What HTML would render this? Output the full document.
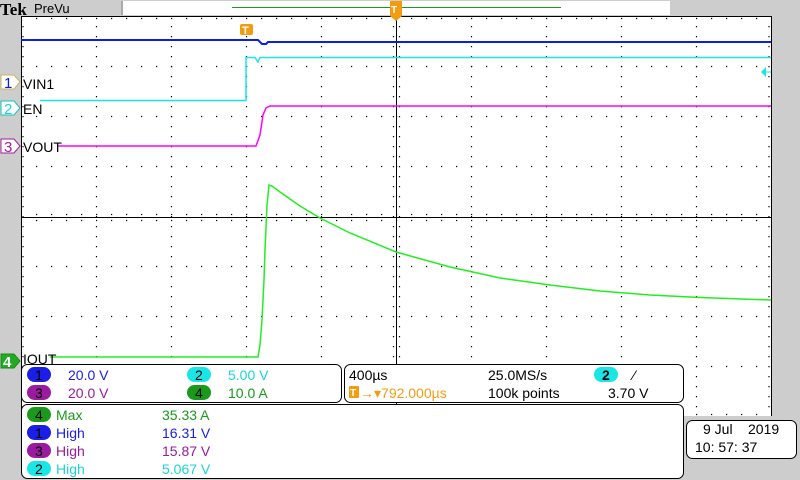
<!DOCTYPE html>
<html><head><meta charset="utf-8"><style>
body{margin:0;width:800px;height:480px;overflow:hidden;background:#cdcdcd;font-family:"Liberation Sans",sans-serif;}
svg{position:absolute;left:0;top:0}
text{font-family:"Liberation Sans",sans-serif;font-size:14px}
</style></head><body>
<svg width="800" height="480" viewBox="0 0 800 480" xmlns="http://www.w3.org/2000/svg">
<rect x="0" y="0" width="800" height="480" fill="#cdcdcd"/>
<text x="0" y="15" style="font-family:'Liberation Serif',serif;font-size:17px;font-weight:bold">Tek</text>
<text x="34" y="13" style="font-size:13px">PreVu</text>
<rect x="122" y="1" width="548" height="14" fill="#fff"/>
<line x1="232" y1="7.5" x2="561" y2="7.5" stroke="#1a9a1a" stroke-width="1"/>
<rect x="121" y="1" width="2" height="14" fill="#aaa"/>
<rect x="21" y="16" width="750" height="400" fill="#fff"/>
<line x1="21.5" y1="16" x2="21.5" y2="416" stroke="#000"/>
<line x1="771.5" y1="16" x2="771.5" y2="416" stroke="#000"/>
<line x1="21" y1="16.5" x2="772" y2="16.5" stroke="#000"/>
<g stroke="#000" stroke-width="1.2" stroke-dasharray="1.2 13.8">
<line x1="36" y1="66.5" x2="771" y2="66.5"/>
<line x1="36" y1="116.5" x2="771" y2="116.5"/>
<line x1="36" y1="166.5" x2="771" y2="166.5"/>
<line x1="36" y1="266.5" x2="771" y2="266.5"/>
<line x1="36" y1="316.5" x2="771" y2="316.5"/>
<line x1="36" y1="366.5" x2="771" y2="366.5"/>
<line x1="36" y1="18.5" x2="771" y2="18.5"/>
<line x1="36" y1="414.5" x2="771" y2="414.5"/>
</g>
<g stroke="#000" stroke-width="1.2" stroke-dasharray="1.2 8.8">
<line x1="96.5" y1="26" x2="96.5" y2="416"/>
<line x1="171.5" y1="26" x2="171.5" y2="416"/>
<line x1="246.5" y1="26" x2="246.5" y2="416"/>
<line x1="321.5" y1="26" x2="321.5" y2="416"/>
<line x1="471.5" y1="26" x2="471.5" y2="416"/>
<line x1="546.5" y1="26" x2="546.5" y2="416"/>
<line x1="621.5" y1="26" x2="621.5" y2="416"/>
<line x1="696.5" y1="26" x2="696.5" y2="416"/>
<line x1="769" y1="26" x2="769" y2="416"/>
<line x1="23" y1="26" x2="23" y2="416"/>
</g>
<g stroke="#000" stroke-width="1.2" stroke-dasharray="1.2 8.8">
<line x1="393.5" y1="26" x2="393.5" y2="416"/>
<line x1="399.5" y1="26" x2="399.5" y2="416"/>
</g>
<g stroke="#000" stroke-width="1.2" stroke-dasharray="1.2 13.8">
<line x1="36" y1="214.5" x2="771" y2="214.5"/>
<line x1="36" y1="220.5" x2="771" y2="220.5"/>
</g>
<line x1="21" y1="217.5" x2="771" y2="217.5" stroke="#000"/>
<line x1="396.5" y1="16" x2="396.5" y2="416" stroke="#000"/>
<polyline fill="none" stroke="#0a1ee6" stroke-width="2" points="21,40 258,40 262,44 266,44 268,42 771,42"/>
<polyline fill="none" stroke="#19e6e6" stroke-width="1.5" points="40,100.5 246,100.5 246,57.5 255,57.5 258,62 260,57.5 771,57.5"/>
<polyline fill="none" stroke="#ff00ff" stroke-width="1.5" points="58,146 256,146 260,135 263,115 266,108 270,106 771,106"/>
<polyline fill="none" stroke="#22ee22" stroke-width="1.5" points="50,357 258,357 260,345 262,320 264,280 265,250 267,205 269,185 272,186 280,192 300,206 320,218 350,233 396,252 450,267 500,278 550,285 600,291 650,295 700,297.5 771,300"/>
<rect x="240" y="24" width="13" height="11" rx="2" fill="#f39c12"/>
<text x="242" y="34" fill="#fff" style="font-size:11px;font-weight:bold">T</text>
<polygon points="390,1 402,1 402,16 396,21 390,16" fill="#f39c12"/>
<text x="391" y="13" fill="#fff" style="font-size:10px;font-weight:bold">T</text>
<polygon points="761,72 766,67 766,77" fill="#19e6e6"/><line x1="764" y1="72" x2="771" y2="72" stroke="#19e6e6"/>
<polygon points="1,75 14,75 20,82 14,89 1,89" fill="#fff" stroke="#c8b560"/>
<text x="4" y="88" fill="#0a1ee6" style="font-size:15px">1</text>
<polygon points="1,101 14,101 20,108 14,115 1,115" fill="#fff" stroke="#19c0c0"/>
<text x="4" y="114" fill="#19d6d6" style="font-size:15px">2</text>
<polygon points="1,139 14,139 20,146 14,153 1,153" fill="#fff" stroke="#a020a0"/>
<text x="4" y="152" fill="#a020a0" style="font-size:15px">3</text>
<polygon points="1,354 14,354 20,361 14,368 1,368" fill="#22aa22" stroke="#1a8a1a"/>
<text x="3" y="367" fill="#fff" style="font-size:15px;font-weight:bold">4</text>
<g fill="#000">
<text x="23" y="89">VIN1</text>
<text x="23" y="114">EN</text>
<text x="23" y="152">VOUT</text>
<text x="23" y="364">IOUT</text>
</g>
<rect x="21.5" y="364.5" width="320" height="38" rx="6" fill="#fff" stroke="#000"/>
<rect x="344.5" y="364.5" width="339" height="38" rx="6" fill="#fff" stroke="#000"/>
<rect x="21.5" y="404.5" width="662" height="74" rx="6" fill="#fff" stroke="#000"/>
<rect x="686.5" y="420.5" width="110" height="38" rx="6" fill="#fff" stroke="#000"/>
<g>
<rect x="27" y="367" width="24" height="15" rx="7.5" fill="#1a1ee6"/><text x="35" y="380" fill="#000">1</text>
<text x="68" y="380" fill="#1a1ee6">20.0 V</text>
<rect x="187" y="367" width="24" height="15" rx="7.5" fill="#19e6e6"/><text x="195" y="380" fill="#000">2</text>
<text x="228" y="380" fill="#19d6d6">5.00 V</text>
<rect x="27" y="385" width="24" height="15" rx="7.5" fill="#9a1aa0"/><text x="35" y="398" fill="#000">3</text>
<text x="68" y="398" fill="#9a1aa0">20.0 V</text>
<rect x="187" y="385" width="24" height="15" rx="7.5" fill="#1a9a1a"/><text x="195" y="398" fill="#000">4</text>
<text x="228" y="398" fill="#1a9a1a">10.0 A</text>
<text x="349" y="380" fill="#000">400µs</text>
<text x="488" y="380" fill="#000">25.0MS/s</text>
<rect x="594" y="367" width="24" height="15" rx="7.5" fill="#19e6e6"/><text x="602" y="380" fill="#000" style="font-weight:bold">2</text>
<text x="633" y="380" fill="#000">⁄</text>
<rect x="349" y="386" width="10" height="12" rx="1" fill="#f39c12"/><text x="350" y="396" fill="#fff" style="font-size:10px;font-weight:bold">T</text>
<text x="360" y="398" fill="#f39c12">→▾792.000µs</text>
<text x="488" y="398" fill="#000">100k points</text>
<text x="608" y="398" fill="#000">3.70 V</text>
<rect x="27" y="407" width="24" height="15" rx="7.5" fill="#1a9a1a"/><text x="35" y="420" fill="#000">4</text>
<text x="56" y="420" fill="#1a9a1a">Max</text><text x="162" y="420" fill="#1a9a1a">35.33 A</text>
<rect x="27" y="425" width="24" height="15" rx="7.5" fill="#1a1ee6"/><text x="35" y="438" fill="#000">1</text>
<text x="56" y="438" fill="#1a1ee6">High</text><text x="162" y="438" fill="#1a1ee6">16.31 V</text>
<rect x="27" y="443" width="24" height="15" rx="7.5" fill="#9a1aa0"/><text x="35" y="456" fill="#000">3</text>
<text x="56" y="456" fill="#9a1aa0">High</text><text x="162" y="456" fill="#9a1aa0">15.87 V</text>
<rect x="27" y="461" width="24" height="15" rx="7.5" fill="#19e6e6"/><text x="35" y="474" fill="#000">2</text>
<text x="56" y="474" fill="#19d6d6">High</text><text x="162" y="474" fill="#19d6d6">5.067 V</text>
<text x="703" y="434" fill="#000">9 Jul</text><text x="748" y="434" fill="#000">2019</text>
<text x="695" y="452" fill="#000">10: 57: 37</text>
</g>
</svg>
</body></html>
